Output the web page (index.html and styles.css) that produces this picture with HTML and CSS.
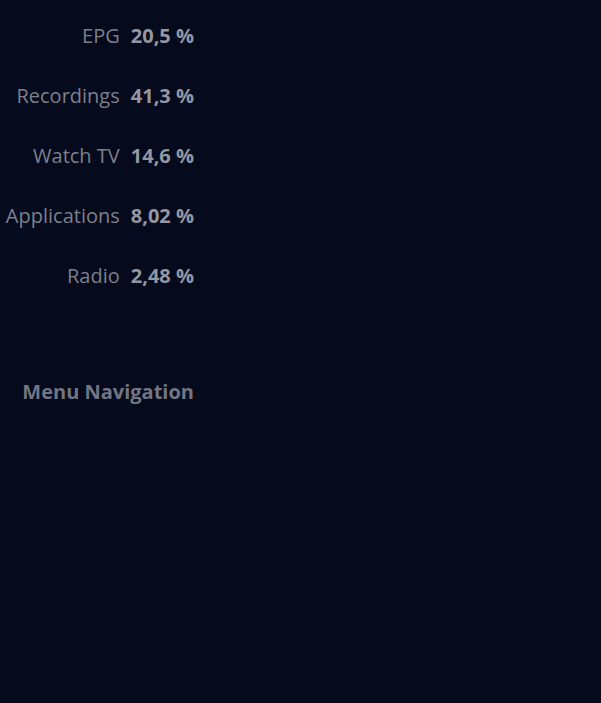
FILE: index.html
```html
<!DOCTYPE html>
<html>
<head>
<meta charset="utf-8">
<link rel="stylesheet" href="styles.css">
</head>
<body>
<div class="panel">
  <div class="row"><span class="label">EPG</span><span class="value">20,5 %</span></div>
  <div class="row"><span class="label">Recordings</span><span class="value">41,3 %</span></div>
  <div class="row"><span class="label">Watch TV</span><span class="value">14,6 %</span></div>
  <div class="row"><span class="label">Applications</span><span class="value">8,02 %</span></div>
  <div class="row"><span class="label">Radio</span><span class="value">2,48 %</span></div>
  <div class="title">Menu Navigation</div>
</div>
</body>
</html>
```
FILE: styles.css
```css
html, body {
  margin: 0;
  padding: 0;
  background: #050a1c;
  height: 100%;
}
.panel {
  width: 194px;
  padding-top: 22px;
  font-family: "Open Sans", sans-serif;
  font-size: 20px;
  display: flex;
  flex-direction: column;
  align-items: flex-end;
}
.row {
  display: flex;
  gap: 11px;
  height: 60px;
  line-height: 28px;
}
.label {
  color: #7d808c;
}
.value {
  color: #9497a2;
  font-weight: 700;
}
.title {
  margin-top: 56px;
  color: #727583;
  font-weight: 700;
  line-height: 28px;
}
```
